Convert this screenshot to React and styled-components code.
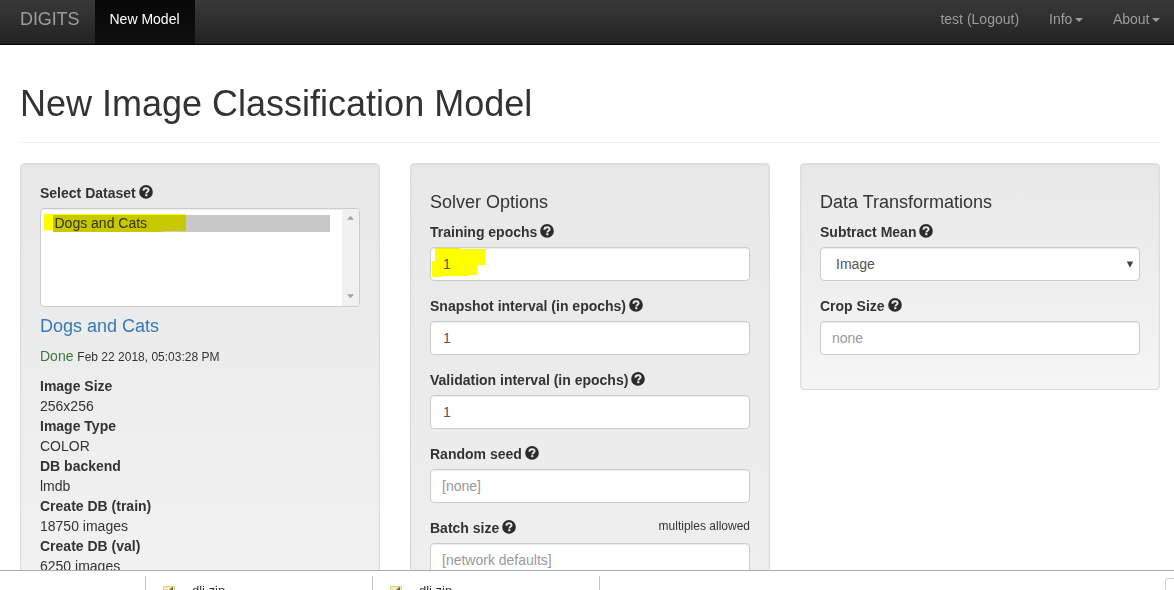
import React from "react";
import styled, { createGlobalStyle } from "styled-components";

const GlobalStyle = createGlobalStyle`
  *, *::before, *::after { box-sizing: border-box; }
  html, body { margin: 0; padding: 0; background: #fff; overflow: hidden; }
  body {
    font-family: "Liberation Sans", Arial, Helvetica, sans-serif;
    font-size: 14px;
    line-height: 20px;
    color: #333;
  }
`;

const Page = styled.div`
  height: 590px;
  display: flex;
  flex-direction: column;
  overflow: hidden;
`;

const Navbar = styled.nav`
  flex: none;
  height: 45px;
  display: flex;
  padding: 0 0 0 20px;
  border-bottom: 1px solid #080808;
  background: linear-gradient(to bottom, #393939 0%, #222 100%);
  color: #9d9d9d;
`;

const Brand = styled.div`
  width: 75px;
  padding-top: 9px;
  font-size: 18px;
  letter-spacing: -0.1px;
  white-space: nowrap;
`;

const NavItem = styled.div`
  display: flex;
  padding: 9px 15px 0;
  white-space: nowrap;
  ${(p) =>
    p.$active &&
    `
    width: 100px;
    padding-left: 14.5px;
    color: #fff;
    background: linear-gradient(to bottom, #080808 0%, #0f0f0f 100%);
  `}
`;

const NavRight = styled.div`
  display: flex;
  margin-left: auto;
  margin-right: -1px;
`;

const Caret = styled.span`
  width: 0;
  height: 0;
  margin: 9px 0 0 2.5px;
  border-top: 4px solid currentColor;
  border-left: 4px solid transparent;
  border-right: 4px solid transparent;
`;

const Main = styled.main`
  flex: 1;
  min-height: 0;
  overflow: hidden;
  padding: 39px 14px 0 20px;
`;

const Title = styled.h1`
  margin: 0;
  height: 59px;
  line-height: 40px;
  font-size: 36px;
  font-weight: 400;
  border-bottom: 1px solid #eee;
`;

const Columns = styled.div`
  display: grid;
  grid-template-columns: repeat(3, 360px);
  column-gap: 30px;
  align-items: start;
  margin-top: 20px;
`;

const Well = styled.section`
  min-height: ${(p) => p.$minHeight || 0}px;
  padding: 19px;
  border: 1px solid #dcdcdc;
  border-radius: 4px;
  background: linear-gradient(to bottom, #e8e8e8 0%, #f5f5f5 100%);
  box-shadow: inset 0 1px 3px rgba(0, 0, 0, 0.05);
`;

const Heading = styled.h4`
  margin: 10px 0;
  height: 19px;
  line-height: 19px;
  font-size: 18px;
  font-weight: 400;
  color: ${(p) => (p.$link ? "#337ab7" : "#333")};
`;

const Group = styled.div`
  margin-bottom: 15px;
`;

const LabelRow = styled.div`
  display: flex;
  justify-content: space-between;
  margin-bottom: 5px;
`;

const Label = styled.label`
  display: flex;
  gap: 3px;
  font-weight: 700;
  white-space: nowrap;
`;

const Note = styled.small`
  font-size: 12px;
  line-height: 17px;
`;

const HelpSvg = styled.svg`
  width: 14px;
  height: 14px;
  margin-top: 2px;
  flex: none;
`;

const Control = styled.div`
  position: relative;
  display: flex;
  align-items: center;
  justify-content: space-between;
  height: 34px;
  padding: 0 5px 0 ${(p) => (p.$select ? 15 : p.$placeholder ? 11 : 12)}px;
  border: 1px solid #ccc;
  border-radius: 4px;
  background: #fff;
  color: ${(p) => (p.$placeholder ? "#999" : "#555")};
  box-shadow: inset 0 1px 1px rgba(0, 0, 0, 0.075);
`;

const SelectArrow = styled.svg`
  width: 8px;
  height: 7px;
`;

const ListBox = styled.div`
  position: relative;
  display: flex;
  justify-content: space-between;
  height: 99px;
  border: 1px solid #ccc;
  border-radius: 4px;
  background: #fff;
  overflow: hidden;
  box-shadow: inset 0 1px 1px rgba(0, 0, 0, 0.075);
`;

const Option = styled.div`
  width: 277px;
  height: 17px;
  margin: 6px 0 0 12px;
  padding-left: 1.5px;
  line-height: 17px;
  background: #c8c8c8;
`;

const Scrollbar = styled.div`
  display: flex;
  flex-direction: column;
  justify-content: space-between;
  align-items: center;
  width: 17px;
  padding: 6px 0 7px;
  background: #f1f1f1;
`;

const ScrollArrow = styled.svg`
  width: 7px;
  height: 5px;
  fill: #a3a3a3;
`;

const Highlight = styled.svg`
  position: absolute;
  left: 0;
  top: 0;
  mix-blend-mode: multiply;
  fill: #ff0;
`;

const Status = styled.div`
  height: 20px;
  margin-bottom: 10px;
  white-space: nowrap;
`;

const Done = styled.span`
  color: #3c763d;
`;

const Stamp = styled.small`
  font-size: 12px;
`;

const Details = styled.dl`
  margin: 0;
`;

const Term = styled.dt`
  font-weight: 700;
`;

const Value = styled.dd`
  margin: 0;
`;

const DownloadBar = styled.footer`
  flex: none;
  display: flex;
  height: 20px;
  padding-top: 5px;
  border-top: 1px solid #adadad;
  background: #fff;
  overflow: hidden;
`;

const Download = styled.div`
  display: flex;
  flex: none;
  width: ${(p) => p.$width}px;
  height: 30px;
  padding: 6px 0 0 17px;
  border-right: 1px solid #c4c4c4;
  font-size: 13px;
  line-height: 18px;
  gap: 16px;
`;

const FileSvg = styled.svg`
  width: 13px;
  height: 16px;
  margin-top: 4px;
`;

const CloseCorner = styled.div`
  flex: none;
  width: 20px;
  height: 24px;
  margin: 2px -11px 0 auto;
  border: 1px solid #d0d0d0;
  border-radius: 3px;
`;

function Help() {
  return (
    <HelpSvg viewBox="0 0 14 14">
      <circle cx="7" cy="6.9" r="6.8" fill="#2b2b2b" />
      <path
        d="M4.4 5.7C4.4 4 5.5 3.2 7.1 3.2C8.7 3.2 9.6 4 9.6 5.2C9.6 6.8 7.3 6.7 7.3 8.5"
        fill="none"
        stroke="#e8e8e8"
        strokeWidth="1.9"
      />
      <rect x="6.2" y="9.2" width="2.2" height="2" fill="#e8e8e8" />
    </HelpSvg>
  );
}

function Field({ label, note, value, placeholder, select, children }) {
  return (
    <Group>
      <LabelRow>
        <Label>
          {label}
          <Help />
        </Label>
        {note && <Note>{note}</Note>}
      </LabelRow>
      <Control $placeholder={!!placeholder} $select={select}>
        {value || placeholder}
        {select && (
          <SelectArrow viewBox="0 0 8 7">
            <path d="M0.8 0.5H7.2L4 6.7Z" fill="#444" />
          </SelectArrow>
        )}
        {children}
      </Control>
    </Group>
  );
}

const details = [
  ["Image Size", "256x256"],
  ["Image Type", "COLOR"],
  ["DB backend", "lmdb"],
  ["Create DB (train)", "18750 images"],
  ["Create DB (val)", "6250 images"],
];

function DownloadItem() {
  return (
    <Download $width={227}>
      <FileSvg viewBox="0 0 13 16">
        <path d="M0.5 0.5H11.5V15H0.5Z" fill="#f5efb4" stroke="#dccf7c" />
        <path d="M5.5 5L8 2L10 1V4L7.5 6Z" fill="#666" />
      </FileSvg>
      dli.zip
    </Download>
  );
}

export default function App() {
  return (
    <Page>
      <GlobalStyle />
      <Navbar>
        <Brand>DIGITS</Brand>
        <NavItem $active>New Model</NavItem>
        <NavRight>
          <NavItem>test (Logout)</NavItem>
          <NavItem>
            Info
            <Caret />
          </NavItem>
          <NavItem>
            About
            <Caret />
          </NavItem>
        </NavRight>
      </Navbar>
      <Main>
        <Title>New Image Classification Model</Title>
        <Columns>
          <Well $minHeight={560}>
            <LabelRow>
              <Label>
                Select Dataset
                <Help />
              </Label>
            </LabelRow>
            <ListBox>
              <Option>Dogs and Cats</Option>
              <Scrollbar>
                <ScrollArrow viewBox="0 0 8 5">
                  <path d="M0 5L4 0.5L8 5Z" />
                </ScrollArrow>
                <ScrollArrow viewBox="0 0 8 5">
                  <path d="M0 0L4 4.5L8 0Z" />
                </ScrollArrow>
              </Scrollbar>
              <Highlight width="160" height="30">
                <path d="M3 5H145V22H122V23H12V21.5H3Z" />
              </Highlight>
            </ListBox>
            <Heading $link>Dogs and Cats</Heading>
            <Status>
              <Done>Done</Done> <Stamp>Feb 22 2018, 05:03:28 PM</Stamp>
            </Status>
            <Details>
              {details.map(([term, value]) => (
                <React.Fragment key={term}>
                  <Term>{term}</Term>
                  <Value>{value}</Value>
                </React.Fragment>
              ))}
            </Details>
          </Well>
          <Well $minHeight={800}>
            <Heading>Solver Options</Heading>
            <Field label="Training epochs" value="1">
              <Highlight width="70" height="32">
                <path d="M4 0H29V1H54V17H46V27H38V28H11V29H1V13H4Z" />
              </Highlight>
            </Field>
            <Field label="Snapshot interval (in epochs)" value="1" />
            <Field label="Validation interval (in epochs)" value="1" />
            <Field label="Random seed" placeholder="[none]" />
            <Field
              label="Batch size"
              note="multiples allowed"
              placeholder="[network defaults]"
            />
          </Well>
          <Well>
            <Heading>Data Transformations</Heading>
            <Field label="Subtract Mean" value="Image" select />
            <Field label="Crop Size" placeholder="none" />
          </Well>
        </Columns>
      </Main>
      <DownloadBar>
        <Download $width={146} />
        <DownloadItem />
        <DownloadItem />
        <CloseCorner />
      </DownloadBar>
    </Page>
  );
}
